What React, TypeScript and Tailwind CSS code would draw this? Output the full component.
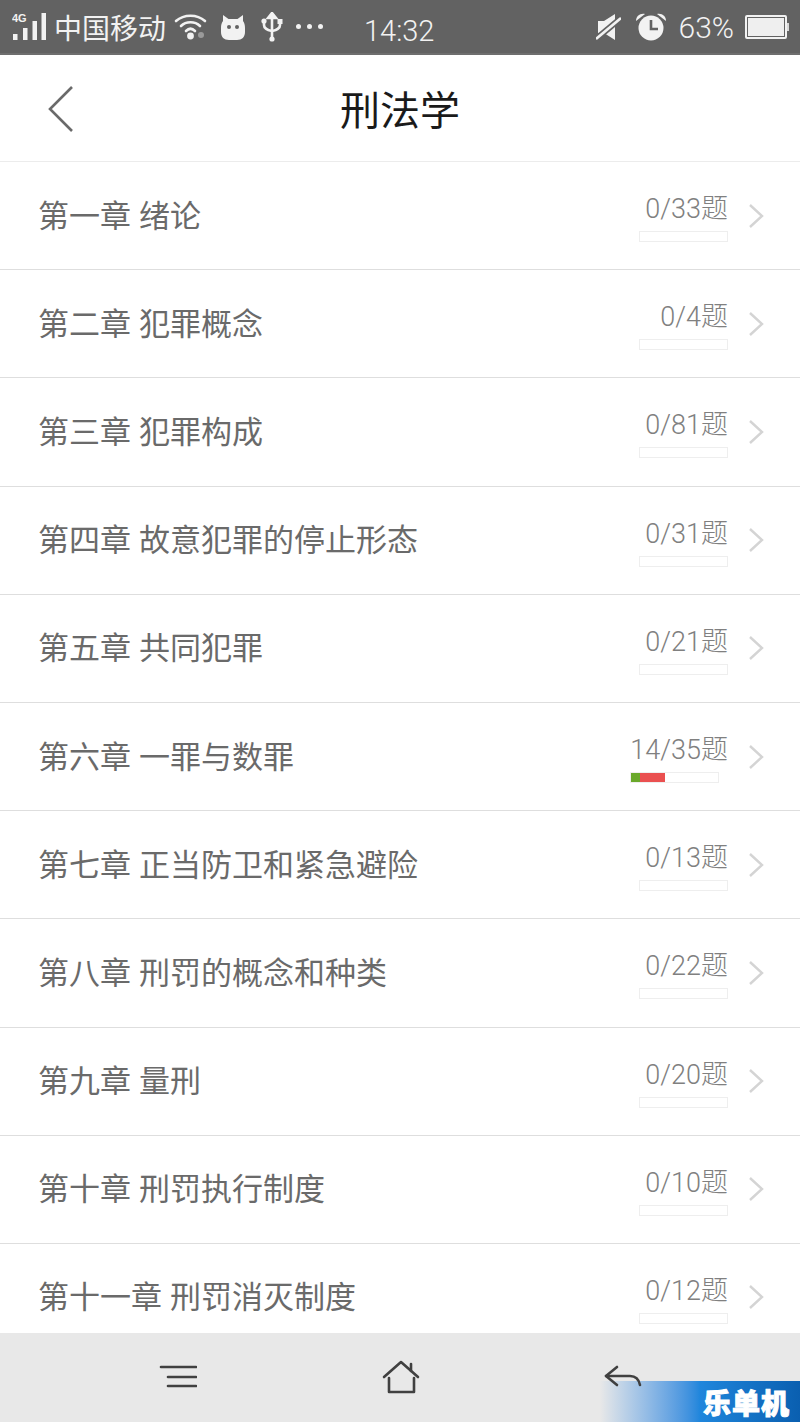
import React from 'react'

const chapters = [
  { title: '第一章 绪论', done: 0, total: 33 },
  { title: '第二章 犯罪概念', done: 0, total: 4 },
  { title: '第三章 犯罪构成', done: 0, total: 81 },
  { title: '第四章 故意犯罪的停止形态', done: 0, total: 31 },
  { title: '第五章 共同犯罪', done: 0, total: 21 },
  { title: '第六章 一罪与数罪', done: 14, total: 35 },
  { title: '第七章 正当防卫和紧急避险', done: 0, total: 13 },
  { title: '第八章 刑罚的概念和种类', done: 0, total: 22 },
  { title: '第九章 量刑', done: 0, total: 20 },
  { title: '第十章 刑罚执行制度', done: 0, total: 10 },
  { title: '第十一章 刑罚消灭制度', done: 0, total: 12 },
]

const StatusBar = () => (
  <div className="flex h-[55px] shrink-0 items-center border-b-2 border-[#6e6e6e] bg-[#626262] pl-[12px] pr-[11px] text-[#f2f2f2]">
    <svg width="36" height="30" viewBox="0 0 36 30" className="shrink-0">
      <text x="0" y="10" fontSize="11" fontWeight="700" fill="#f2f2f2" fontFamily="Liberation Sans, sans-serif">4G</text>
      <rect x="1" y="22" width="4.5" height="6" fill="#f2f2f2" />
      <rect x="11" y="16" width="4.5" height="12" fill="#f2f2f2" />
      <rect x="20.5" y="9" width="4.5" height="19" fill="#f2f2f2" />
      <rect x="29.5" y="1" width="4.5" height="27" fill="#f2f2f2" />
    </svg>
    <span className="ml-[6px] text-[28px] leading-none">中国移动</span>
    <svg width="34" height="28" viewBox="0 0 34 28" className="ml-[8px] shrink-0" fill="none" stroke="#f2f2f2" strokeWidth="2.6" strokeLinecap="round">
      <path d="M2 8C10 1 23 1 31 8" />
      <path d="M7 13C12 8 21 8 26 13" />
      <path d="M12 18C15 15 18 15 21 18" />
      <circle cx="16.5" cy="23" r="3.4" fill="#f2f2f2" stroke="none" />
      <circle cx="27" cy="22" r="3" fill="#9a9a9a" stroke="none" />
    </svg>
    <svg width="24" height="26" viewBox="0 0 24 26" className="ml-[13px] shrink-0">
      <path d="M2 1L7.5 5H16.5L22 1L22 7C23.5 9 24 11 24 14V18C24 23 21 26 16 26H8C3 26 0 23 0 18V14C0 11 .5 9 2 7Z" fill="#f2f2f2" />
      <circle cx="8" cy="13" r="2" fill="#626262" />
      <circle cx="16" cy="13" r="2" fill="#626262" />
    </svg>
    <svg width="22" height="30" viewBox="0 0 22 30" className="ml-[16px] shrink-0" fill="none" stroke="#f2f2f2" strokeWidth="2.6">
      <path d="M11 4V27" />
      <path d="M7 6L11 1L15 6Z" fill="#f2f2f2" />
      <path d="M3 9V13C3 16 6 18 11 19C16 18 19 16 19 13V9" />
      <circle cx="3" cy="9" r="2.6" fill="#f2f2f2" stroke="none" />
      <rect x="16.5" y="7" width="5" height="5" fill="#f2f2f2" stroke="none" />
      <circle cx="11" cy="27" r="2.6" fill="#f2f2f2" stroke="none" />
    </svg>
    <div className="ml-[13px] flex w-[27px] shrink-0 justify-between">
      <span className="h-[5px] w-[5px] rounded-full bg-[#f2f2f2]" />
      <span className="h-[5px] w-[5px] rounded-full bg-[#f2f2f2]" />
      <span className="h-[5px] w-[5px] rounded-full bg-[#f2f2f2]" />
    </div>
    <span className="ml-[41px] mt-[10px] font-['Roboto',sans-serif] text-[29px] font-light leading-none">14:32</span>
    <svg width="25" height="26" viewBox="0 0 25 26" className="ml-auto shrink-0">
      <path d="M2 7H8L19 0V26L8 19H2Z" fill="#f2f2f2" />
      <path d="M0 25L25 4" stroke="#626262" strokeWidth="6" />
      <path d="M0 25L25 4" stroke="#f2f2f2" strokeWidth="2.6" />
    </svg>
    <svg width="30" height="28" viewBox="0 0 30 28" className="ml-[15px] shrink-0">
      <circle cx="15" cy="15" r="12.5" fill="#f2f2f2" />
      <path d="M0 8C0 3 4 0 9 1Z" fill="#f2f2f2" />
      <path d="M30 8C30 3 26 0 21 1Z" fill="#f2f2f2" />
      <path d="M15 7V16H22" fill="none" stroke="#626262" strokeWidth="2.6" />
    </svg>
    <span className="ml-[13px] mt-[2px] font-['Roboto',sans-serif] text-[30px] font-light leading-none">63%</span>
    <div className="ml-[11px] flex shrink-0 items-center">
      <div className="h-[24px] w-[42px] rounded-[2px] border-[2px] border-[#f2f2f2] p-[1px]">
        <div className="h-full w-full bg-[#efefef]" />
      </div>
      <div className="h-[8px] w-[2px] bg-[#d8d8d8]" />
    </div>
  </div>
)

const Header = () => (
  <div className="relative flex h-[107px] shrink-0 items-center justify-center border-b border-[#ececec] bg-white">
    <svg width="28" height="48" viewBox="0 0 28 48" className="absolute left-[48px] top-[30px]" fill="none" stroke="#6a6a6a" strokeWidth="2.6">
      <path d="M24 2L2 24L24 46" />
    </svg>
    <span className="mt-[-1px] text-[40px] leading-none text-[#1a1a1a]">刑法学</span>
  </div>
)

const Row = ({ title, done, total }: { title: string; done: number; total: number }) => (
  <div className="flex h-[108.2px] shrink-0 items-center border-b border-[#dedede] pl-[38px] pr-[36px]">
    <span className="mt-[-5px] flex-1 text-[31px] leading-none text-[#6a6a6a] [word-spacing:1px]">{title}</span>
    <div className="mt-[5px] flex flex-col">
      <span className="text-right font-['Roboto','Noto_Sans_CJK_SC',sans-serif] text-[27px] font-light leading-[30px] text-[#808080]">
        {done}/{total}题
      </span>
      <div className="mt-[7px] flex h-[11px] w-[89px] overflow-hidden border border-[#eeeeee] bg-white">
        {done > 0 && (
          <>
            <div className="h-full w-[9px] bg-[#6aa82a]" />
            <div className="h-full w-[25px] bg-[#ea5050]" />
          </>
        )}
      </div>
    </div>
    <svg width="16" height="26" viewBox="0 0 16 26" className="ml-[20px] shrink-0" fill="none" stroke="#d4d4d4" strokeWidth="2.4">
      <path d="M2 2L14 13L2 24" />
    </svg>
  </div>
)

const NavBar = () => (
  <div className="relative flex h-[89px] shrink-0 items-center bg-[#e8e8e8]">
    {/* watermark */}
    <div className="absolute bottom-0 right-0 flex h-[41px] w-[200px] items-center justify-end bg-gradient-to-r from-[#e8e8e8] via-[#1f86dc] via-50% to-[#0a5fb0] pr-[10px]">
      <span className="text-[28px] font-black leading-none tracking-[1px] text-white [-webkit-text-stroke:1px_white]">乐单机</span>
    </div>
    <div className="relative flex w-full items-center justify-between pl-[159px] pr-[158px]">
      <svg width="38" height="28" viewBox="0 0 38 28" className="mt-[3px]" fill="none" stroke="#404040" strokeWidth="2.6" strokeLinecap="round">
        <path d="M2 2H37" />
        <path d="M9 12H37" />
        <path d="M9 21H37" />
      </svg>
      <svg width="38" height="36" viewBox="0 0 38 36" fill="none" stroke="#404040" strokeWidth="2.6" strokeLinecap="round" strokeLinejoin="round">
        <path d="M2 17L19 2L36 17" />
        <path d="M29 4V11" />
        <path d="M7 18V32H32V18" />
      </svg>
      <svg width="38" height="28" viewBox="0 0 38 28" className="mt-[3px]" fill="none" stroke="#404040" strokeWidth="2.6" strokeLinecap="round" strokeLinejoin="round">
        <path d="M13 2L2 11L13 20" />
        <path d="M2 11H26C32 11 35 15 36 20" />
      </svg>
    </div>
  </div>
)

export default function App() {
  return (
    <div className="flex h-[1422px] w-[800px] flex-col overflow-hidden bg-white font-['Noto_Sans_CJK_SC','Noto_Sans',sans-serif]">
      <StatusBar />
      <Header />
      <div className="flex min-h-0 flex-1 flex-col overflow-hidden">
        {chapters.map((c) => (
          <Row key={c.title} {...c} />
        ))}
      </div>
      <NavBar />
    </div>
  )
}
